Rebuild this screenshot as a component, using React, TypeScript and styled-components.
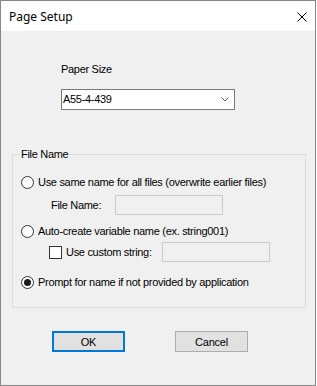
import React from "react";
import styled, { createGlobalStyle } from "styled-components";

const Global = createGlobalStyle`
  html, body { margin: 0; padding: 0; background: #ffffff; }
  body { font-family: "Liberation Sans", Arial, sans-serif; font-size: 11px; color: #000; }
  * { box-sizing: border-box; }
`;

const Window = styled.div`
  width: 316px;
  height: 386px;
  border: 1px solid #868686;
  background: #f0f0f0;
  display: flex;
  flex-direction: column;
`;

const TitleBar = styled.div`
  height: 30px;
  flex: none;
  background: #ffffff;
  display: flex;
  align-items: center;
  justify-content: space-between;
  padding: 0 8px 0 8px;
`;

const TitleText = styled.span`
  font-family: "Noto Sans", "Open Sans", sans-serif;
  font-size: 12px;
  color: #000;
  margin-top: 1px;
`;

const CloseBox = styled.div`
  width: 10px;
  height: 10px;
  display: flex;
  margin-top: 1px;
`;

const Body = styled.div`
  flex: 1;
  display: flex;
  flex-direction: column;
`;

const PaperSection = styled.div`
  margin: 32px 0 0 60px;
  display: flex;
  flex-direction: column;
`;

const Label = styled.span<{ $w?: number }>`
  line-height: 13px;
  white-space: nowrap;
  letter-spacing: -0.3px;
  ${(p) => (p.$w ? `width: ${p.$w}px; flex: none;` : "")}
`;

const Combo = styled.div`
  margin-top: 13px;
  width: 174px;
  height: 21px;
  border: 1px solid #7a7a7a;
  background: #fff;
  display: flex;
  align-items: center;
  justify-content: space-between;
  padding: 0 5px 0 1px;
`;

const GroupBox = styled.div`
  position: relative;
  margin: 44px 0 0 11px;
  width: 294px;
  height: 154px;
  border: 1px solid #dcdcdc;
  display: flex;
  flex-direction: column;
  padding: 17px 0 0 8px;
`;

const GroupTitle = styled.span`
  position: absolute;
  top: -7px;
  left: 7px;
  padding: 0 1px;
  line-height: 13px;
  letter-spacing: -0.3px;
  background: #f0f0f0;
`;

const Row = styled.div<{ $mt: number; $indent?: number }>`
  height: 20px;
  margin-top: ${(p) => p.$mt}px;
  padding-left: ${(p) => p.$indent ?? 0}px;
  display: flex;
  align-items: center;
  white-space: nowrap;
`;

const RadioCircle = styled.span<{ $on?: boolean }>`
  width: 13px;
  height: 13px;
  border-radius: 50%;
  border: 1px solid #333;
  background: #fff;
  flex: none;
  display: flex;
  align-items: center;
  justify-content: center;
  margin-right: 4px;
  &::after {
    content: "";
    display: ${(p) => (p.$on ? "block" : "none")};
    width: 7px;
    height: 7px;
    border-radius: 50%;
    background: #1a1a1a;
  }
`;

const CheckBox = styled.span`
  width: 13px;
  height: 13px;
  border: 1px solid #333;
  background: #fff;
  flex: none;
  margin-right: 4px;
`;

const TextField = styled.span`
  width: 108px;
  height: 20px;
  border: 1px solid #cccccc;
  background: #f0f0f0;
  flex: none;
`;

const ButtonRow = styled.div`
  margin: 23px 0 0 51px;
  display: flex;
  gap: 50px;
`;

const Button = styled.div<{ $default?: boolean }>`
  width: 73px;
  height: 21px;
  background: #e1e1e1;
  border: ${(p) => (p.$default ? "2px solid #0078d7" : "1px solid #adadad")};
  display: flex;
  align-items: center;
  justify-content: center;
  font-size: 11px;
  letter-spacing: -0.2px;
`;

export default function App() {
  return (
    <>
      <Global />
      <Window>
        <TitleBar>
          <TitleText>Page Setup</TitleText>
          <CloseBox>
            <svg width="10" height="10" viewBox="0 0 10 10">
              <path d="M0.5 0.5 L9.5 9.5 M9.5 0.5 L0.5 9.5" stroke="#000" strokeWidth="1" />
            </svg>
          </CloseBox>
        </TitleBar>
        <Body>
          <PaperSection>
            <Label>Paper Size</Label>
            <Combo>
              <Label>A55-4-439</Label>
              <svg width="8" height="5" viewBox="0 0 8 5">
                <path d="M0.5 0.5 L4 4 L7.5 0.5" stroke="#606060" strokeWidth="1" fill="none" />
              </svg>
            </Combo>
          </PaperSection>
          <GroupBox>
            <GroupTitle>File Name</GroupTitle>
            <Row $mt={0}>
              <RadioCircle />
              <Label>Use same name for all files (overwrite earlier files)</Label>
            </Row>
            <Row $mt={3} $indent={30}>
              <Label $w={64}>File Name:</Label>
              <TextField />
            </Row>
            <Row $mt={6}>
              <RadioCircle />
              <Label>Auto-create variable name (ex. string001)</Label>
            </Row>
            <Row $mt={1} $indent={28}>
              <CheckBox />
              <Label $w={96}>Use custom string:</Label>
              <TextField />
            </Row>
            <Row $mt={10}>
              <RadioCircle $on />
              <Label>Prompt for name if not provided by application</Label>
            </Row>
          </GroupBox>
          <ButtonRow>
            <Button $default>OK</Button>
            <Button>Cancel</Button>
          </ButtonRow>
        </Body>
      </Window>
    </>
  );
}
